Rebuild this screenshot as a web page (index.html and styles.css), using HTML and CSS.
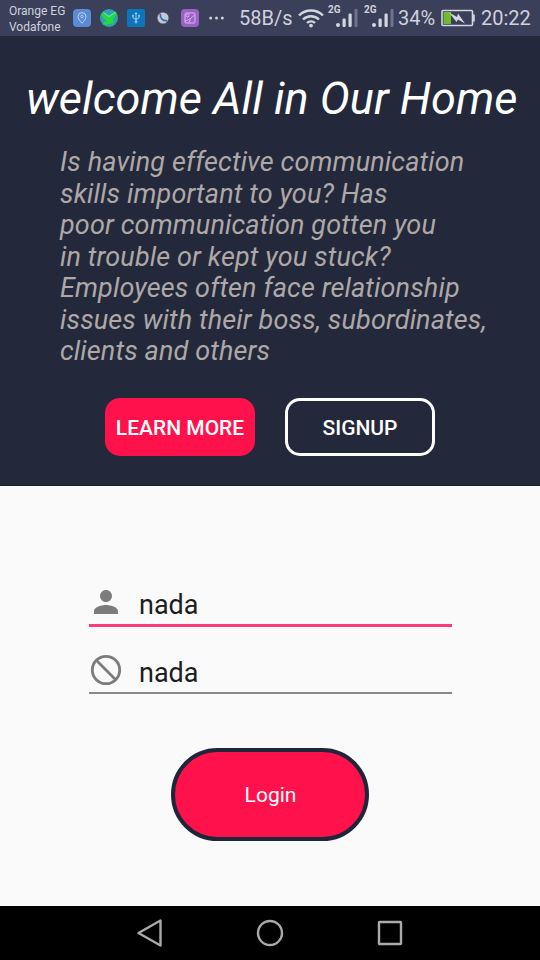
FILE: index.html
```html
<!DOCTYPE html>
<html lang="en">
<head>
<meta charset="utf-8">
<meta name="viewport" content="width=device-width">
<title>Login</title>
<link rel="stylesheet" href="styles.css">
</head>
<body>
<div class="statusbar">
  <div class="carriers"><span>Orange EG</span><span>Vodafone</span></div>
  <div class="notifications">
    <svg width="18" height="18" viewBox="0 0 18 18"><rect width="18" height="18" rx="4" fill="#5c8bd6"/><path d="M9 14.2C6.500 11.300 5 9.600 5 7.600a4 4 0 0 1 8 0c0 2-1.500 3.700-4 6.600z" fill="none" stroke="#bfd3f1" stroke-width="1"/><circle cx="9" cy="7.500" r="1.300" fill="none" stroke="#bfd3f1" stroke-width=".8"/></svg>
    <svg width="18" height="18" viewBox="0 0 18 18"><circle cx="9" cy="9" r="9" fill="#2fa3ae"/><path d="M1 5l3-1.500L9 7l7-4 1 2-4 5 1 4-4 1-5 1-2-2 4-2-4-4z" fill="#22dc3b"/><path d="M3.500 3.500L9 7.500l6.500-4.500" fill="none" stroke="#7fe3cf" stroke-width="1"/></svg>
    <svg width="18" height="18" viewBox="0 0 18 18"><rect width="18" height="18" rx="2" fill="#0c76bc"/><g fill="none" stroke="#9fd0ec" stroke-width="1"><path d="M9 4v9M6 6.500v2.300l3 1.700 3-1.700V6.500"/><circle cx="9" cy="13" r="1"/></g><path d="M7.500 5L9 3l1.500 2zM5.200 5.800h1.600v1.600H5.200zM11.200 5.800h1.600v1.600h-1.600z" fill="#9fd0ec"/></svg>
    <svg width="18" height="18" viewBox="0 0 18 18"><circle cx="9" cy="9" r="6.500" fill="#4a5064"/><circle cx="9" cy="9" r="5.500" fill="#c3c7d0"/><path d="M6.300 5.500c-.3 3.500 2.700 6.500 6.200 6.200" fill="none" stroke="#2f6cc0" stroke-width="1.700" stroke-linecap="round"/></svg>
    <svg width="18" height="18" viewBox="0 0 18 18"><rect width="18" height="18" rx="4" fill="#9b61c6"/><g fill="none" stroke="#d7bbe8" stroke-width="1"><rect x="4" y="4" width="10" height="10" rx="1"/><circle cx="6.500" cy="6.500" r="1.500"/><path d="M4 12.500l3.500-2 1.500-.5 4.500-4M7.500 14l2-3.500"/></g></svg>
    <svg width="18" height="18" viewBox="0 0 18 18" fill="#cfd1dc"><circle cx="2.700" cy="9" r="1.500"/><circle cx="8.500" cy="9" r="1.500"/><circle cx="14.300" cy="9" r="1.500"/></svg>
  </div>
  <span class="speed">58B/s</span>
  <svg class="wifi" width="26" height="20" viewBox="0 0 26 20" fill="none" stroke="#d4d6df" stroke-width="2.400"><path d="M1 7.500a17 17 0 0 1 24 0M5 11.500a11.300 11.300 0 0 1 16 0M9 15a5.700 5.700 0 0 1 8 0"/><circle cx="13" cy="17.600" r="1.900" fill="#d4d6df" stroke="none"/></svg>
  <div class="signal"><span>2G</span><svg width="22" height="19" viewBox="0 0 22 19" fill="#d4d6df"><circle cx="2" cy="16" r="2"/><rect x="6.500" y="9.500" width="3.200" height="8.500" rx="1.200"/><rect x="12.500" y="4.500" width="3.200" height="13.500" rx="1.200"/><rect x="18.500" y="0" width="3" height="18" rx="1" opacity=".35"/></svg></div>
  <div class="signal"><span>2G</span><svg width="22" height="19" viewBox="0 0 22 19" fill="#d4d6df"><circle cx="2" cy="16" r="2"/><rect x="6.500" y="9.500" width="3.200" height="8.500" rx="1.200"/><rect x="12.500" y="4.500" width="3.200" height="13.500" rx="1.200"/><rect x="18.500" y="0" width="3" height="18" rx="1" opacity=".35"/></svg></div>
  <span class="percent">34%</span>
  <svg class="battery" width="34" height="18" viewBox="0 0 34 18"><rect x="1" y="1.500" width="30.500" height="15" rx="1" fill="none" stroke="#d4d6df" stroke-width="1.600"/><path d="M32 5.500h1.800v7H32z" fill="#d4d6df"/><path d="M2.500 3h7.500v12H2.500z" fill="#72b92f"/><path d="M8 3.500l8 4.500 1-3.500 7 10-7-4-1.500 2.500z" fill="#d4d6df"/></svg>
  <span class="clock">20:22</span>
</div>

<header class="hero">
  <h1>welcome All in Our Home</h1>
  <p>Is having effective communication<br>skills important to you? Has<br>poor communication gotten you<br>in trouble or kept you stuck?<br>Employees often face relationship<br>issues with their boss, subordinates,<br>clients and others</p>
  <div class="actions">
    <button class="btn learn">LEARN MORE</button>
    <button class="btn signup">SIGNUP</button>
  </div>
</header>

<main class="form">
  <div class="field focused">
    <svg width="36" height="36" viewBox="0 0 24 24" fill="#7c7c7c"><path d="M12 12c2.210 0 4-1.790 4-4s-1.790-4-4-4-4 1.790-4 4 1.790 4 4 4zm0 2c-2.670 0-8 1.340-8 4v2h16v-2c0-2.660-5.330-4-8-4z"/></svg>
    <span>nada</span>
  </div>
  <div class="field">
    <svg width="36" height="36" viewBox="0 0 36 36" fill="none" stroke="#7c7c7c" stroke-width="2.800"><circle cx="18" cy="18" r="13.700"/><path d="M8.300 8.300l19.400 19.400"/></svg>
    <span>nada</span>
  </div>
  <button class="login">Login</button>
</main>

<nav class="navbar">
  <svg width="30" height="30" viewBox="0 0 30 30"><path d="M3.500 15L25.500 2.500v25z"/></svg>
  <svg width="30" height="30" viewBox="0 0 30 30"><circle cx="15" cy="15" r="12"/></svg>
  <svg width="30" height="30" viewBox="0 0 30 30"><rect x="4" y="4" width="22" height="22" rx=".5"/></svg>
</nav>
</body>
</html>
```
FILE: styles.css
```css
* { box-sizing: border-box; }
body {
  margin: 0;
  width: 540px;
  height: 960px;
  display: flex;
  flex-direction: column;
  overflow: hidden;
  background: #fafafa;
  font-family: Roboto, "Liberation Sans", sans-serif;
}
svg { display: block; flex: none; }
button { font-family: inherit; padding: 0; border: 0; color: #fff; }

.statusbar {
  height: 36px;
  flex: none;
  display: flex;
  align-items: center;
  background: #3a3f5a;
  color: #d0d2dc;
  white-space: nowrap;
}
.carriers {
  width: 64px;
  margin-left: 9px;
  padding-top: 1px;
  display: flex;
  flex-direction: column;
  font-size: 12px;
  line-height: 16px;
}
.notifications { display: flex; gap: 9px; }
.speed { width: 54px; margin-left: 13px; font-size: 20px; }
.wifi { margin-left: 5px; }
.signal {
  width: 36px;
  height: 36px;
  display: flex;
  justify-content: flex-end;
  padding: 9px 2px 0 0;
  position: relative;
}
.signal span {
  position: absolute;
  left: 4px;
  top: 4px;
  font-size: 10px;
  line-height: 12px;
  font-weight: 700;
}
.percent { width: 38px; margin-left: 2px; font-size: 20px; }
.battery { margin-left: 5px; }
.clock { margin-left: 6px; font-size: 20px; }

.hero {
  height: 450px;
  flex: none;
  background: #24283b;
  border-bottom: 1px solid #1b2030;
}
.hero h1 {
  margin: 36px 0 0 26px;
  font-size: 45px;
  line-height: 53px;
  font-weight: 400;
  font-style: italic;
  letter-spacing: .03px;
  color: #fff;
  white-space: nowrap;
}
.hero p {
  margin: 22px 0 0 60px;
  font-size: 27px;
  line-height: 31.500px;
  font-style: italic;
  letter-spacing: .13px;
  color: #aea8a8;
  white-space: nowrap;
}
.actions {
  display: flex;
  justify-content: center;
  gap: 30px;
  margin-top: 30px;
}
.btn {
  width: 150px;
  height: 58px;
  border-radius: 15px;
  font-size: 21px;
  font-weight: 500;
  padding-top: 2px;
}
.learn { background: #ff114b; }
.signup { background: transparent; border: 3px solid #fff; }

.form {
  flex: 1;
  display: flex;
  flex-direction: column;
  align-items: center;
  padding-top: 82px;
}
.field {
  width: 363px;
  height: 67px;
  display: flex;
  align-items: center;
  gap: 15px;
  padding-top: 21px;
  font-size: 27px;
  color: #1d1d1d;
  border-bottom: 2px solid #888;
}
.field svg { margin-left: -.5px; }
.field span { padding-top: 5px; }
.field.focused {
  height: 59px;
  padding-top: 12px;
  border-bottom: 3px solid #ff3b7b;
}
.login {
  width: 198px;
  height: 93px;
  margin-top: 54px;
  padding-left: 1px;
  border: 4px solid #20263a;
  border-radius: 47px;
  background: #ff114b;
  font-size: 21px;
}

.navbar {
  height: 54px;
  flex: none;
  display: flex;
  justify-content: center;
  align-items: center;
  gap: 90px;
  background: #000;
}
.navbar svg { fill: none; stroke: #aaa; stroke-width: 2.400; stroke-linejoin: round; }
```
